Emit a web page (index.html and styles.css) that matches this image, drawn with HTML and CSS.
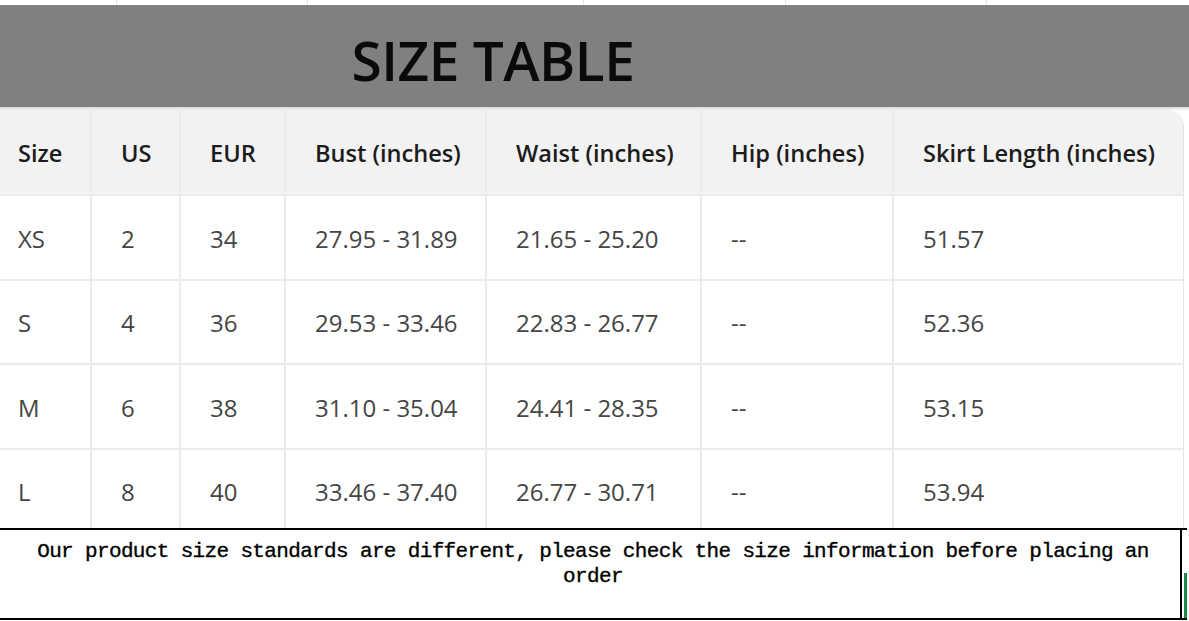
FILE: index.html
```html
<!DOCTYPE html>
<html lang="en">
<head>
<meta charset="utf-8">
<title>Size Table</title>
<link rel="stylesheet" href="styles.css">
</head>
<body>
<div class="sheet">
  <div class="grid-strip">
    <span class="gcell g1"></span><span class="gcell g2"></span><span class="gcell g3"></span><span class="gcell g4"></span><span class="gcell g5"></span><span class="gcell g6"></span>
  </div>
  <div class="banner"><h1 class="banner-title">SIZE TABLE</h1></div>
  <div class="gap-strip"></div>
  <div class="table-wrap">
    <table class="size-table">
      <colgroup>
        <col class="c1"><col class="c2"><col class="c3"><col class="c4"><col class="c5"><col class="c6"><col class="c7">
      </colgroup>
      <thead>
        <tr><th>Size</th><th>US</th><th>EUR</th><th>Bust (inches)</th><th>Waist (inches)</th><th>Hip (inches)</th><th>Skirt Length (inches)</th></tr>
      </thead>
      <tbody>
        <tr><td>XS</td><td>2</td><td>34</td><td>27.95 - 31.89</td><td>21.65 - 25.20</td><td>--</td><td>51.57</td></tr>
        <tr><td>S</td><td>4</td><td>36</td><td>29.53 - 33.46</td><td>22.83 - 26.77</td><td>--</td><td>52.36</td></tr>
        <tr><td>M</td><td>6</td><td>38</td><td>31.10 - 35.04</td><td>24.41 - 28.35</td><td>--</td><td>53.15</td></tr>
        <tr><td>L</td><td>8</td><td>40</td><td>33.46 - 37.40</td><td>26.77 - 30.71</td><td>--</td><td>53.94</td></tr>
      </tbody>
    </table>
  </div>
  <div class="note">
    <p class="note-text">Our product size standards are different, please check the size information before placing an order</p>
    <span class="note-mark"></span>
  </div>
</div>
</body>
</html>
```

FILE: styles.css
```css
* { box-sizing: border-box; }
html, body { margin: 0; padding: 0; background: #ffffff; }
body { width: 1189px; height: 621px; overflow: hidden; }

.sheet { display: flex; flex-direction: column; width: 1189px; }

.grid-strip { display: flex; height: 5px; }
.gcell { height: 5px; border-right: 1px solid #e3e3e3; }
.g1 { width: 117px; }
.g2 { width: 191px; }
.g3 { width: 276px; }
.g4 { width: 202px; }
.g5 { width: 201px; }
.g6 { flex: 1; border-right: none; }

.banner {
  height: 102px;
  background: #808080;
  display: flex;
  align-items: center;
  justify-content: center;
  padding-right: 203px;
}
.banner-title {
  margin: 6px 0 0 0;
  font-family: "Open Sans", "Noto Sans", sans-serif;
  font-weight: 600;
  font-size: 55px;
  color: #0a0a0a;
  letter-spacing: -0.5px;
  line-height: 1;
}

.gap-strip { height: 3px; background: linear-gradient(#d8d8d8, #f4f4f4); }

.table-wrap {
  height: 418px;
  overflow: hidden;
  width: 1184px;
  border-top-right-radius: 16px;
  border-right: 1px solid #e4e4e4;
}
.size-table {
  border-collapse: collapse;
  table-layout: fixed;
  width: 1183px;
  font-family: "Open Sans", "Noto Sans", sans-serif;
}
.c1 { width: 91px; }
.c2 { width: 89px; }
.c3 { width: 105px; }
.c4 { width: 201px; }
.c5 { width: 215px; }
.c6 { width: 192px; }
.c7 { width: 290px; }

.size-table th, .size-table td {
  text-align: left;
  padding: 2px 0 0 29px;
  border-right: 2px solid #ececec;
  border-bottom: 2px solid #ececec;
  white-space: nowrap;
}
.size-table th:first-child, .size-table td:first-child { padding-left: 18px; }
.size-table th:last-child, .size-table td:last-child { border-right: none; }
.size-table th {
  height: 85px;
  background: #f2f2f2;
  color: #1c1c1c;
  font-weight: 600;
  font-size: 23.6px;
}
.size-table td {
  height: 84.5px;
  color: #454545;
  font-weight: 400;
  font-size: 24px;
}

.note {
  position: relative;
  height: 92px;
  width: 1187px;
  border-top: 2px solid #000;
  border-bottom: 2px solid #000;
  padding: 9px 16px 0 19px;
}
.note::after {
  content: "";
  position: absolute;
  right: 5px;
  top: 0;
  bottom: 0;
  border-right: 2px solid #000;
}
.note-text {
  margin: 0;
  width: 1148px;
  text-align: center;
  font-family: "Liberation Mono", "Courier New", monospace;
  font-size: 21px;
  letter-spacing: -0.65px;
  line-height: 25px;
  color: #000;
  -webkit-text-stroke: 0.35px #000;
}
.note-mark {
  position: absolute;
  right: 0;
  bottom: 0;
  width: 3px;
  height: 45px;
  background: #1e8a4a;
}
```
